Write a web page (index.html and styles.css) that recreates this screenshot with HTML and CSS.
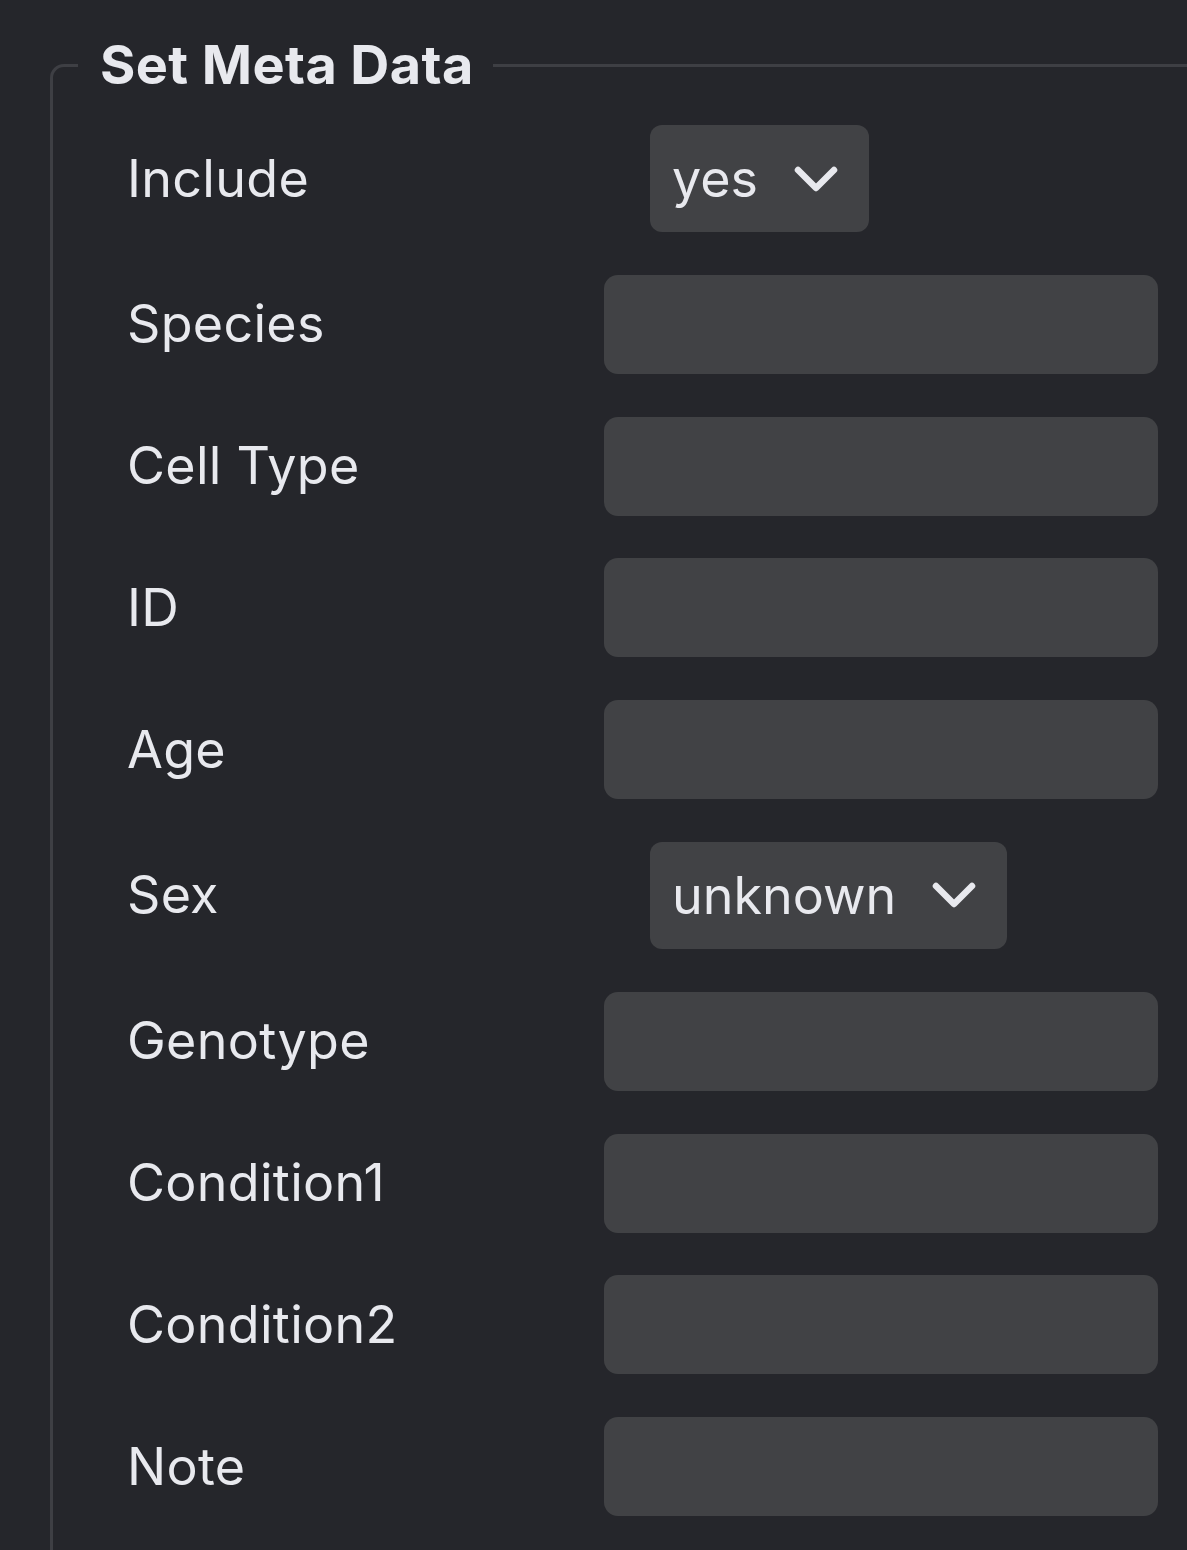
FILE: index.html
```html
<!DOCTYPE html>
<html lang="en">
<head>
<meta charset="utf-8">
<title>Set Meta Data</title>
<link rel="stylesheet" href="styles.css">
</head>
<body>
<fieldset class="meta">
  <legend class="meta-title">Set Meta Data</legend>
  <div class="rows">
    <label class="lbl">Include</label>
    <div class="ctl"><div class="select"><span>yes</span><svg class="chev" viewBox="0 0 44 26"><path d="M4 4 L22 22 L40 4"/></svg></div></div>
    <label class="lbl">Species</label>
    <div class="ctl"><div class="input"></div></div>
    <label class="lbl">Cell Type</label>
    <div class="ctl"><div class="input"></div></div>
    <label class="lbl">ID</label>
    <div class="ctl"><div class="input"></div></div>
    <label class="lbl">Age</label>
    <div class="ctl"><div class="input"></div></div>
    <label class="lbl">Sex</label>
    <div class="ctl"><div class="select"><span>unknown</span><svg class="chev" viewBox="0 0 44 26"><path d="M4 4 L22 22 L40 4"/></svg></div></div>
    <label class="lbl">Genotype</label>
    <div class="ctl"><div class="input"></div></div>
    <label class="lbl">Condition1</label>
    <div class="ctl"><div class="input"></div></div>
    <label class="lbl">Condition2</label>
    <div class="ctl"><div class="input"></div></div>
    <label class="lbl">Note</label>
    <div class="ctl"><div class="input"></div></div>
  </div>
</fieldset>
</body>
</html>
```
FILE: styles.css
```css
html, body {
  margin: 0;
  padding: 0;
  background: #25262b;
  overflow: hidden;
  height: 1550px;
}
body {
  font-family: Inter, "Noto Sans", "Liberation Sans", sans-serif;
  color: #e8e9ee;
}
.meta {
  margin: 33px 0 0 50px;
  width: 1220px;
  border: 3px solid #3e3f44;
  border-radius: 14px;
  padding: 0 0 120px 0;
  box-sizing: border-box;
}
.meta-title {
  margin-left: 25px;
  padding: 0 19px 0 22px;
  font-weight: 700;
  font-size: 54px;
  letter-spacing: 0.4px;
  line-height: 64px;
  color: #e8e9ee;
}
.rows {
  display: grid;
  grid-template-columns: 477px 554px;
  row-gap: 42.8px;
  align-items: center;
  padding: 28px 0 0 74px;
}
.lbl {
  font-size: 52px;
  letter-spacing: 0.3px;
  line-height: 60px;
}
.ctl {
  display: flex;
  align-items: center;
}
.input {
  width: 554px;
  height: 99px;
  background: #414245;
  border-radius: 14px;
}
.select {
  margin-left: 46px;
  height: 107px;
  box-sizing: border-box;
  display: flex;
  align-items: center;
  gap: 36px;
  padding: 0 31px 0 22px;
  background: #414245;
  border-radius: 12px;
  font-size: 52px;
}
.chev {
  width: 44px;
  height: 26px;
  fill: none;
  stroke: #e8e9ee;
  stroke-width: 6.5;
  stroke-linecap: round;
  stroke-linejoin: round;
}
```
